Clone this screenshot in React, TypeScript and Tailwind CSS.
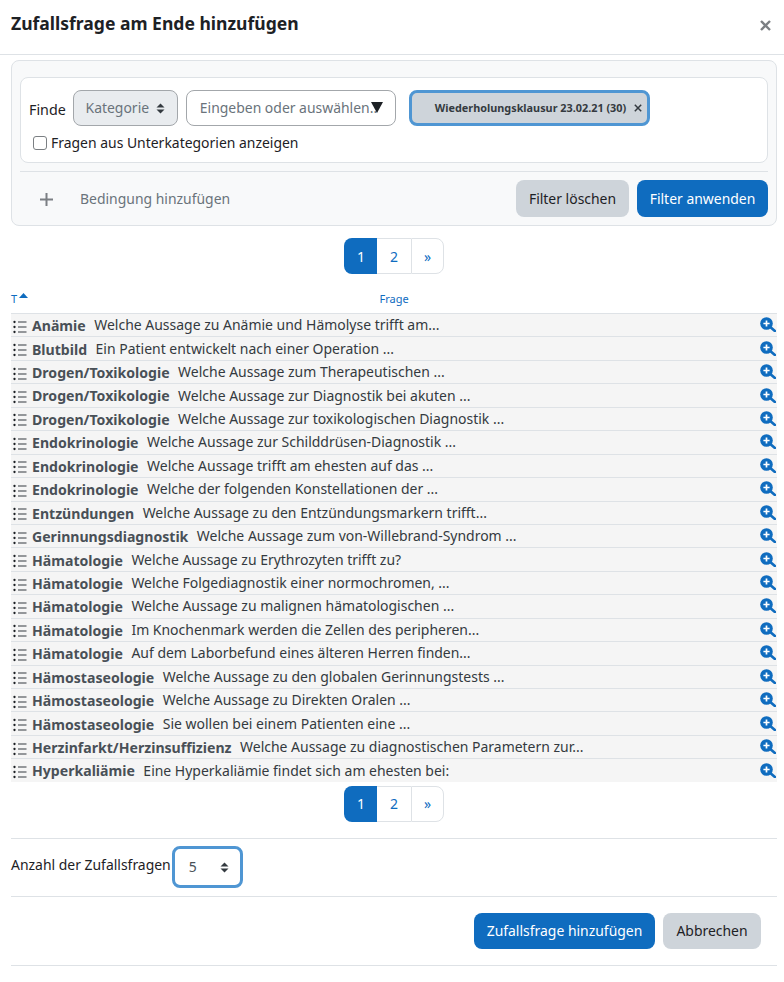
const rows: [string, string][] = [
  ["Anämie", "Welche Aussage zu Anämie und Hämolyse trifft am..."],
  ["Blutbild", "Ein Patient entwickelt nach einer Operation ..."],
  ["Drogen/Toxikologie", "Welche Aussage zum Therapeutischen ..."],
  ["Drogen/Toxikologie", "Welche Aussage zur Diagnostik bei akuten ..."],
  ["Drogen/Toxikologie", "Welche Aussage zur toxikologischen Diagnostik ..."],
  ["Endokrinologie", "Welche Aussage zur Schilddrüsen-Diagnostik ..."],
  ["Endokrinologie", "Welche Aussage trifft am ehesten auf das ..."],
  ["Endokrinologie", "Welche der folgenden Konstellationen der ..."],
  ["Entzündungen", "Welche Aussage zu den Entzündungsmarkern trifft..."],
  ["Gerinnungsdiagnostik", "Welche Aussage zum von-Willebrand-Syndrom ..."],
  ["Hämatologie", "Welche Aussage zu Erythrozyten trifft zu?"],
  ["Hämatologie", "Welche Folgediagnostik einer normochromen, ..."],
  ["Hämatologie", "Welche Aussage zu malignen hämatologischen ..."],
  ["Hämatologie", "Im Knochenmark werden die Zellen des peripheren..."],
  ["Hämatologie", "Auf dem Laborbefund eines älteren Herren finden..."],
  ["Hämostaseologie", "Welche Aussage zu den globalen Gerinnungstests ..."],
  ["Hämostaseologie", "Welche Aussage zu Direkten Oralen ..."],
  ["Hämostaseologie", "Sie wollen bei einem Patienten eine ..."],
  ["Herzinfarkt/Herzinsuffizienz", "Welche Aussage zu diagnostischen Parametern zur..."],
  ["Hyperkaliämie", "Eine Hyperkaliämie findet sich am ehesten bei:"],
];

function ListIcon() {
  return (
    <svg width="14" height="14" viewBox="0 0 14 14" className="ml-[1.5px] mt-[3px] shrink-0">
      <g fill="#1d2125">
        <circle cx="1.5" cy="2" r="1.15" />
        <circle cx="1.5" cy="7" r="1.15" />
        <circle cx="1.5" cy="12" r="1.15" />
        <rect x="5" y="1.5" width="8.5" height="1" fill="#343a40" />
        <rect x="5" y="6.5" width="8.5" height="1" fill="#343a40" />
        <rect x="5" y="11.5" width="8.5" height="1" fill="#343a40" />
      </g>
    </svg>
  );
}

function ZoomIcon() {
  return (
    <svg width="16" height="15" viewBox="0 0 16 15" className="mb-[1px] shrink-0">
      <circle cx="6.5" cy="6.5" r="6.3" fill="#0f6cbf" />
      <path d="M10.8 10.4 L14.9 14" stroke="#0f6cbf" strokeWidth="2.6" strokeLinecap="round" />
      <path d="M6.5 3.4 V9.6 M3.4 6.5 H9.6" stroke="#fff" strokeWidth="1.7" />
    </svg>
  );
}

function Updown({ color = "#343a40" }: { color?: string }) {
  return (
    <svg width="9" height="11" viewBox="0 0 9 11" className="shrink-0">
      <path d="M4.5 0.5 L8.5 4.6 H0.5 Z M4.5 10.5 L0.5 6.4 H8.5 Z" fill={color} />
    </svg>
  );
}

function Pagination() {
  return (
    <div className="flex h-[36px] w-[100px] justify-center text-[14px]">
      <div className="flex w-[33px] items-center justify-center rounded-l-[8px] bg-[#0f6cbf] pl-[1px] text-white">1</div>
      <div className="flex w-[34px] items-center justify-center border-y border-[#dee2e6] text-[#0f6cbf]">2</div>
      <div className="flex w-[33px] items-center justify-center rounded-r-[8px] border border-[#dee2e6] text-[#0f6cbf]">»</div>
    </div>
  );
}

export default function App() {
  return (
    <div className="h-[982px] w-[784px] overflow-hidden bg-white font-['Noto_Sans',sans-serif] text-[13.95px] text-[#1d2125]">
      <header className="flex h-[55px] items-center justify-between border-b border-[#dee2e6] pl-[11px] pr-[13px]">
        <h1 className="pb-[7px] text-[17.55px] font-bold text-[#1d2125]">Zufallsfrage am Ende hinzufügen</h1>
        <svg width="11" height="11" viewBox="0 0 11 11" className="mb-[3px]">
          <path d="M1 1 L10 10 M10 1 L1 10" stroke="#7b7f83" strokeWidth="2.4" />
        </svg>
      </header>

      <section className="ml-[11px] mr-[7px] mt-[5px] h-[166px] rounded-[8px] border border-[#dee2e6] bg-[#f8f9fa] px-[8px] pt-[16px]">
        <div className="h-[86px] rounded-[8px] border border-[#dee2e6] bg-white pl-[8px] pt-[12px]">
          <div className="flex items-center">
            <span className="mr-[7px] pt-[3px] text-[14.3px]">Finde</span>
            <div className="flex h-[36px] w-[105px] items-center justify-center gap-[7px] rounded-[8px] border border-[#a3a7ab] bg-[#e9ecef] text-[#6a737b]">
              Kategorie <Updown />
            </div>
            <div className="relative ml-[8px] flex h-[36px] w-[210px] items-center overflow-hidden rounded-[8px] border border-[#a3a7ab] bg-white pl-[13px] text-[#6a737b]">
              <span className="whitespace-nowrap">Eingeben oder auswählen..</span>
              <svg width="12" height="11" viewBox="0 0 12 11" className="absolute right-[12px] top-[11px]">
                <path d="M0 0 H12 L6 11 Z" fill="#1d2125" />
              </svg>
            </div>
            <div className="ml-[13px] flex h-[36px] w-[241px] items-center rounded-[8px] border-[3px] border-[#4f96d3] bg-[#ced4da] pl-[23px] text-[10.85px] font-bold text-[#343a40]">
              <span className="whitespace-nowrap">Wiederholungsklausur 23.02.21 (30)</span>
              <svg width="8" height="8" viewBox="0 0 8 8" className="ml-[8px]">
                <path d="M0.8 0.8 L7.2 7.2 M7.2 0.8 L0.8 7.2" stroke="#343a40" strokeWidth="1.5" />
              </svg>
            </div>
          </div>
          <label className="mt-[7px] flex items-center pl-[4px]">
            <span className="mr-[4px] h-[14px] w-[14px] rounded-[3px] border border-[#7b7f83] bg-white" />
            Fragen aus Unterkategorien anzeigen
          </label>
        </div>
        <div className="mt-[8px] flex h-[47px] items-start justify-between border-t border-[#dee2e6] pt-[8px]">
          <div className="flex h-[37px] items-center pt-[2px] text-[#6a737b]">
            <svg width="13" height="13" viewBox="0 0 13 13" className="ml-[20px]">
              <path d="M6.5 0 V13 M0 6.5 H13" stroke="#7b7f83" strokeWidth="2" />
            </svg>
            <span className="ml-[27px]">Bedingung hinzufügen</span>
          </div>
          <div className="flex gap-[8px]">
            <button className="h-[37px] w-[113px] rounded-[8px] bg-[#ced4da] pt-[2px] text-[#1d2125]">Filter löschen</button>
            <button className="h-[37px] w-[131px] rounded-[8px] bg-[#0f6cbf] pt-[2px] text-white">Filter anwenden</button>
          </div>
        </div>
      </section>

      <div className="ml-[11px] mr-[7px] mt-[12px] flex justify-center"><Pagination /></div>

      <div className="ml-[11px] mr-[7px] mt-[15px] flex h-[24px] text-[11px] text-[#0f6cbf]">
        <span className="flex w-[368.5px] items-start gap-[2px] pt-[2px]">
          T
          <svg width="9" height="5" viewBox="0 0 9 5" className="mt-[2px]"><path d="M4.5 0 L9 5 H0 Z" fill="#0f6cbf" /></svg>
        </span>
        <span className="pt-[2px]">Frage</span>
      </div>

      <div className="ml-[11px] mr-[7px]">
        {rows.map(([cat, q], i) => (
          <div key={i} className="flex h-[23.45px] items-center border-t border-[#dee2e6] bg-[#f5f5f5] pr-[1px] text-[13.98px]">
            <ListIcon />
            <span className="ml-[5.5px] mt-[1px] whitespace-nowrap text-[14.1px] font-bold text-[#495057]">{cat}</span>
            <span className="ml-[8.5px] mt-[1px] min-w-0 flex-1 whitespace-nowrap text-[#343a40]">{q}</span>
            <ZoomIcon />
          </div>
        ))}
      </div>

      <div className="ml-[11px] mr-[7px] mt-[4px] flex justify-center"><Pagination /></div>

      <div className="ml-[11px] mr-[7px] mt-[16px] flex h-[59px] items-center border-y border-[#dee2e6]">
        <span className="pb-[4px]">Anzahl der Zufallsfragen</span>
        <div className="ml-[1px] flex h-[42px] w-[71px] items-center justify-between rounded-[8px] border-[3px] border-[#4f96d3] bg-white pl-[14px] pr-[11px] text-[#495057]">
          5 <Updown />
        </div>
      </div>

      <div className="ml-[11px] mr-[7px] flex h-[69px] items-start justify-end gap-[8px] border-b border-[#dee2e6] pr-[16px] pt-[16px]">
        <button className="h-[36px] w-[181px] rounded-[8px] bg-[#0f6cbf] pt-[2px] text-white">Zufallsfrage hinzufügen</button>
        <button className="h-[36px] w-[98px] rounded-[8px] bg-[#ced4da] pt-[2px] text-[#1d2125]">Abbrechen</button>
      </div>
    </div>
  );
}
